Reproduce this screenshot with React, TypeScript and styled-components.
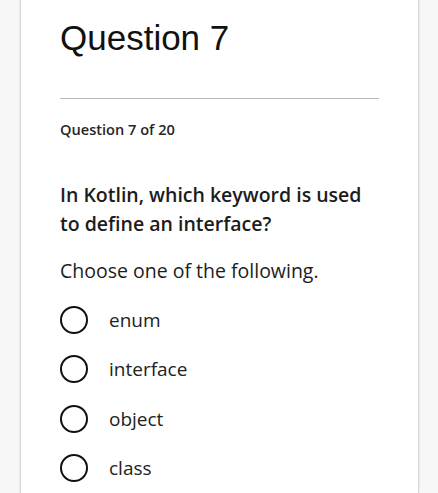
import React from "react";
import styled, {createGlobalStyle} from "styled-components";

const GlobalStyle = createGlobalStyle`
    html, body {
        margin: 0;
        padding: 0;
        background: #f7f7f7;
    }
    * {
        box-sizing: border-box;
    }
`

const Page = styled.div`
    display: flex;
    justify-content: flex-start;
    padding: 0 0 0 20px;
    height: 493px;
    overflow: hidden;
`

const Card = styled.div`
    width: 399px;
    min-height: 493px;
    background: #ffffff;
    border-left: 1px solid #d6d6d6;
    border-right: 1px solid #d6d6d6;
    box-shadow: 0 0 2px rgba(0, 0, 0, 0.12);
    padding: 14px 39px 0 39px;
    color: #1c1c1c;
`

const Title = styled.h1`
    margin: 0;
    font-family: "Liberation Sans", Arial, sans-serif;
    font-weight: 400;
    font-size: 35px;
    line-height: 48px;
    color: #111;
`

const Divider = styled.hr`
    margin: 36px 0 0 0;
    border: none;
    border-top: 1px solid #b8b8b8;
`

const Counter = styled.div`
    margin-top: 20px;
    font-family: "Open Sans", sans-serif;
    font-weight: 600;
    font-size: 14.6px;
    line-height: 20px;
    color: #262626;
`

const Prompt = styled.div`
    margin-top: 41px;
    font-family: "Open Sans", sans-serif;
    font-weight: 600;
    font-size: 19.5px;
    line-height: 29px;
`

const Hint = styled.div`
    margin-top: 20px;
    font-family: "Open Sans", sans-serif;
    font-weight: 400;
    font-size: 19.5px;
    line-height: 26px;
`

const Options = styled.div`
    margin-top: 22px;
    display: flex;
    flex-direction: column;
    gap: 21.3px;
`

const Option = styled.label`
    display: flex;
    align-items: center;
    gap: 21px;
    font-family: "Open Sans", sans-serif;
    font-size: 19px;
    line-height: 28px;
    color: #222;
    cursor: pointer;
`

const Radio = styled.span`
    display: block;
    width: 28px;
    height: 28px;
    border-radius: 50%;
    border: 2.5px solid #111;
    flex-shrink: 0;
`

const answers = ["enum", "interface", "object", "class"]

const App = () => <>
    <GlobalStyle/>
    <Page>
        <Card>
            <Title>Question 7</Title>
            <Divider/>
            <Counter>Question 7 of 20</Counter>
            <Prompt>In Kotlin, which keyword is used<br/>to define an interface?</Prompt>
            <Hint>Choose one of the following.</Hint>
            <Options>
                {answers.map(answer => <Option key={answer}>
                    <Radio/>
                    {answer}
                </Option>)}
            </Options>
        </Card>
    </Page>
</>

export default App
